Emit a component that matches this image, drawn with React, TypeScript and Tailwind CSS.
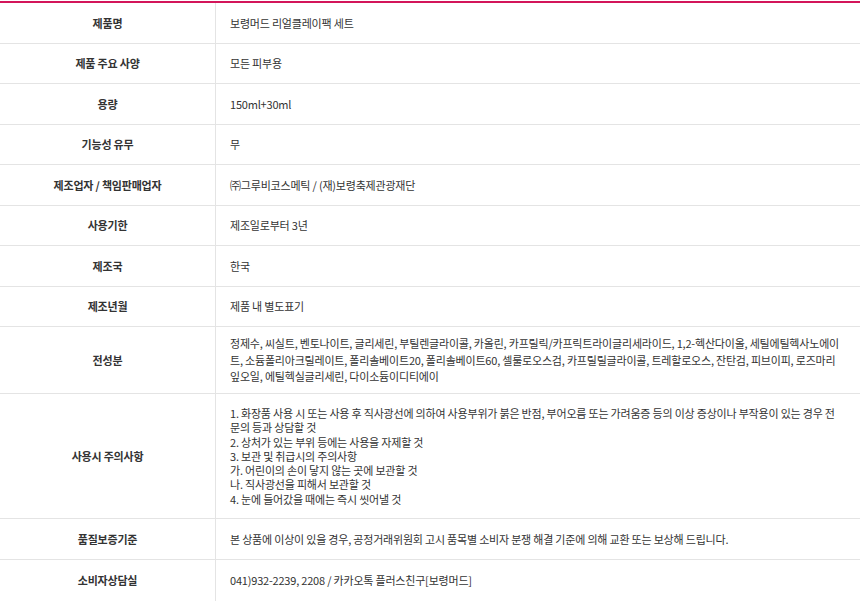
import React from "react";

type Row = {
  label: string;
  lines: string[];
  h: string;
  lh?: string;
};

const rows: Row[] = [
  { label: "제품명", lines: ["보령머드 리얼클레이팩 세트"], h: "h-[40.5px]" },
  { label: "제품 주요 사양", lines: ["모든 피부용"], h: "h-[40.5px]" },
  { label: "용량", lines: ["150ml+30ml"], h: "h-[40.5px]" },
  { label: "기능성 유무", lines: ["무"], h: "h-[40.5px]" },
  { label: "제조업자 / 책임판매업자", lines: ["㈜그루비코스메틱 / (재)보령축제관광재단"], h: "h-[40.5px]" },
  { label: "사용기한", lines: ["제조일로부터 3년"], h: "h-[40.5px]" },
  { label: "제조국", lines: ["한국"], h: "h-[40.5px]" },
  { label: "제조년월", lines: ["제품 내 별도표기"], h: "h-[40.5px]" },
  {
    label: "전성분",
    lines: [
      "정제수, 씨실트, 벤토나이트, 글리세린, 부틸렌글라이콜, 카올린, 카프릴릭/카프릭트라이글리세라이드, 1,2-헥산다이올, 세틸에틸헥사노에이",
      "트, 소듐폴리아크릴레이트, 폴리솔베이트20, 폴리솔베이트60, 셀룰로오스검, 카프릴릴글라이콜, 트레할로오스, 잔탄검, 피브이피, 로즈마리",
      "잎오일, 에틸헥실글리세린, 다이소듐이디티에이",
    ],
    h: "h-[67px]",
    lh: "leading-[16.5px]",
  },
  {
    label: "사용시 주의사항",
    lines: [
      "1. 화장품 사용 시 또는 사용 후 직사광선에 의하여 사용부위가 붉은 반점, 부어오름 또는 가려움증 등의 이상 증상이나 부작용이 있는 경우 전",
      "문의 등과 상담할 것",
      "2. 상처가 있는 부위 등에는 사용을 자제할 것",
      "3. 보관 및 취급시의 주의사항",
      "가. 어린이의 손이 닿지 않는 곳에 보관할 것",
      "나. 직사광선을 피해서 보관할 것",
      "4. 눈에 들어갔을 때에는 즉시 씻어낼 것",
    ],
    h: "h-[125px]",
    lh: "leading-[14.2px]",
  },
  {
    label: "품질보증기준",
    lines: ["본 상품에 이상이 있을 경우, 공정거래위원회 고시 품목별 소비자 분쟁 해결 기준에 의해 교환 또는 보상해 드립니다."],
    h: "h-[41px]",
  },
  { label: "소비자상담실", lines: ["041)932-2239, 2208 / 카카오톡 플러스친구[보령머드]"], h: "h-[41px]" },
];

export default function App() {
  return (
    <div
      className="w-[860px] h-[601px] overflow-hidden bg-white pt-px text-[11px] tracking-[-0.2px] text-[#333]"
      style={{ fontFamily: '"Noto Sans CJK KR", "Noto Sans", sans-serif' }}
    >
      <div className="border-t-2 border-[#d3155a]">
        {rows.map((r, i) => (
          <div
            key={r.label}
            className={`flex ${r.h} ${i < rows.length - 1 ? "border-b border-[#e4e4e4]" : ""}`}
          >
            <div className="w-[216px] shrink-0 border-r border-[#e4e4e4] flex items-center justify-center font-bold">
              {r.label}
            </div>
            <div className={`flex-1 min-w-0 flex items-center pl-[14px] pr-[12px] ${r.lh ?? ""}`}>
              <div>
                {r.lines.map((l) => (
                  <div key={l} className="whitespace-nowrap">
                    {l}
                  </div>
                ))}
              </div>
            </div>
          </div>
        ))}
      </div>
    </div>
  );
}
